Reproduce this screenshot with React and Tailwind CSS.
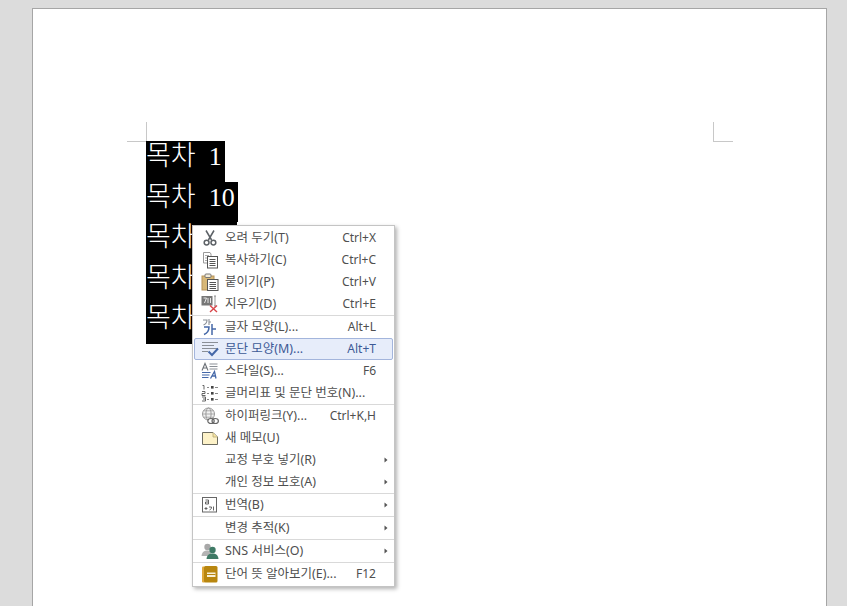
const Cut = () => (
  <svg width="18" height="18" viewBox="0 0 18 18" fill="none">
    <path d="M5 1.5 L10.6 11 M13 1.5 L7.4 11" stroke="#5c6166" strokeWidth="1.5" />
    <circle cx="5.6" cy="13.6" r="2.4" stroke="#5c6166" strokeWidth="1.5" />
    <circle cx="12.4" cy="13.6" r="2.4" stroke="#5c6166" strokeWidth="1.5" />
  </svg>
);
const Copy = () => (
  <svg width="18" height="18" viewBox="0 0 18 18" fill="none">
    <path d="M2.5 1.5 H9 L10 3 V12 H2.5 Z" fill="#fff" stroke="#9a9a9a" />
    <path d="M4 4.5H8M4 7H8M4 9.5H6" stroke="#aaa" />
    <rect x="6.5" y="5.5" width="10" height="11.5" fill="#fff" stroke="#555" />
    <path d="M8.5 8.5H14.5M8.5 10.5H14.5M8.5 12.5H14.5M8.5 14.5H14.5" stroke="#555" />
  </svg>
);
const Paste = () => (
  <svg width="18" height="18" viewBox="0 0 18 18" fill="none">
    <rect x="1" y="3" width="12" height="14" fill="#d8b878" stroke="#b8945a" />
    <rect x="4" y="1" width="6" height="3.5" rx="1" fill="#f4ecd8" stroke="#777" />
    <rect x="6.5" y="6.5" width="10.5" height="11" fill="#fff" stroke="#555" />
    <path d="M8.5 9.5H15M8.5 11.5H15M8.5 13.5H15M8.5 15.5H15" stroke="#555" />
  </svg>
);
const Erase = () => (
  <svg width="18" height="18" viewBox="0 0 18 18" fill="none">
    <rect x="0.5" y="1" width="11" height="9.5" fill="#777" />
    <path d="M2.5 3H5.5L3.5 8M7 3V8M9.5 3V8" stroke="#e8e8e8" strokeWidth="1" />
    <path d="M13 1H15M14 1V11M13 11H15" stroke="#888" strokeWidth="0.9" />
    <path d="M9 10.5 L16 17 M16 10.5 L9 17" stroke="#d8454a" strokeWidth="1.4" />
  </svg>
);
const CharShape = () => (
  <svg width="18" height="18" viewBox="0 0 18 18" fill="none">
    <path d="M2 2H6C6 4.5 5 6 2.5 7" stroke="#8a8f96" strokeWidth="1.1" />
    <path d="M8 1V7M8 4H10" stroke="#8a8f96" strokeWidth="1.1" />
    <path d="M3 9H8C8 12.5 6.5 15 3 16.5" stroke="#4568a8" strokeWidth="1.5" />
    <path d="M11 6V17M11 11H15" stroke="#4568a8" strokeWidth="1.5" />
  </svg>
);
const ParaShape = () => (
  <svg width="18" height="18" viewBox="0 0 18 18" fill="none">
    <path d="M1 2.5H17M1 5.5H13M1 8.5H17M1 11.5H7" stroke="#8a8f96" strokeWidth="1.1" />
    <path d="M7.5 11.5 L11 15 L17 8.5" stroke="#4568a8" strokeWidth="2" />
  </svg>
);
const Style = () => (
  <svg width="18" height="18" viewBox="0 0 18 18" fill="none">
    <path d="M1 8.5 L4 1.5 L7 8.5 M2.2 6H5.8" stroke="#6d7278" strokeWidth="1.1" />
    <path d="M8.5 2H16.5M8.5 4.5H16.5M8.5 7H16.5" stroke="#8a8f96" />
    <path d="M1 10.5H9.5M1 13H8.5M1 15.5H7.5" stroke="#4568a8" strokeWidth="1.1" />
    <path d="M9.5 16.5 L13.5 9.5 L15 16.5 M11 14H15" stroke="#4568a8" strokeWidth="1.3" />
  </svg>
);
const Bullet = () => (
  <svg width="18" height="18" viewBox="0 0 18 18" fill="none">
    <path d="M1.5 1.5H3V5.5M1 7.5H4V9.5H1V11.5H4.5M1 13H4.5V15H2M4.5 15V17H1" stroke="#555" strokeWidth="0.9" />
    <path d="M6 3.5H8M6 9.5H8M6 15.5H8" stroke="#888" />
    <rect x="10" y="2" width="2.6" height="2.6" fill="#444" />
    <rect x="10" y="8" width="2.6" height="2.6" fill="#444" />
    <rect x="10" y="14" width="2.6" height="2.6" fill="#444" />
    <path d="M14 3.5H17M14 9.5H17M14 15.5H17" stroke="#888" />
  </svg>
);
const Link = () => (
  <svg width="18" height="18" viewBox="0 0 18 18" fill="none">
    <circle cx="7.5" cy="7" r="6" fill="#f2f2f2" stroke="#9a9a9a" />
    <ellipse cx="7.5" cy="7" rx="2.6" ry="6" stroke="#9a9a9a" />
    <path d="M1.5 7H13.5M2.5 3.8H12.5M2.5 10.2H12.5" stroke="#9a9a9a" strokeWidth="0.8" />
    <ellipse cx="10" cy="14" rx="3.2" ry="2.5" fill="#fff" stroke="#666" strokeWidth="1.2" />
    <ellipse cx="14.2" cy="14" rx="3.2" ry="2.5" stroke="#666" strokeWidth="1.2" />
  </svg>
);
const Memo = () => (
  <svg width="18" height="18" viewBox="0 0 18 18" fill="none">
    <path d="M1.5 3.5H12L16.5 8V15.5H1.5Z" fill="#fdf2c8" stroke="#6b6b60" />
    <path d="M12 3.5V8H16.5" fill="#f6e4a0" stroke="#b5a878" strokeWidth="0.8" />
  </svg>
);
const Translate = () => (
  <svg width="18" height="18" viewBox="0 0 18 18" fill="none">
    <rect x="1.5" y="1.5" width="14" height="14.5" fill="#fff" stroke="#666" />
    <path d="M4.5 4H7.5V8H4.5V6H7.5" stroke="#555" strokeWidth="0.9" />
    <path d="M3.5 12.5H6.5M5 11V14M8 11H10.5C10.5 12.5 10 13.5 8.5 14M12.5 10.5V14.5" stroke="#555" strokeWidth="0.9" />
  </svg>
);
const Sns = () => (
  <svg width="18" height="18" viewBox="0 0 18 18" fill="none">
    <circle cx="6.5" cy="5" r="3.2" fill="#a8a8a8" />
    <path d="M0.5 14C1 10 3 8.5 6.5 8.5C9 8.5 10 10 10 14Z" fill="#b4b4b4" />
    <circle cx="11.5" cy="8" r="3.2" fill="#3f7a66" />
    <path d="M5.5 17C6 13 8 11.5 11.5 11.5C15 11.5 17 13 17.5 17Z" fill="#3f7a66" />
  </svg>
);
const Dict = () => (
  <svg width="18" height="18" viewBox="0 0 18 18" fill="none">
    <rect x="1" y="1.5" width="3" height="16" rx="1" fill="#e0a93c" />
    <rect x="3" y="1" width="13.5" height="16.5" rx="1.5" fill="#b8860f" />
    <rect x="6" y="7.5" width="8.5" height="4.5" fill="#f8f0d8" />
    <path d="M6 9.5H14.5" stroke="#b8860f" />
  </svg>
);

const Arrow = () => (
  <svg width="4" height="6" viewBox="0 0 4 6">
    <path d="M0.5 0.5 L3.5 3 L0.5 5.5 Z" fill="#555" />
  </svg>
);

const Row = ({ icon: Icon, label, keys, sub, active }) => (
  <div
    className={
      "h-[22px] flex items-center border rounded-[2px] " +
      (active ? "bg-[#e7edfa] border-[#a3b5dc] text-[#3d5a96]" : "border-transparent text-[#4f4f4f]")
    }
  >
    <div className="w-[30px] shrink-0 flex items-center justify-center">{Icon ? <Icon /> : null}</div>
    <div className="flex-1 whitespace-nowrap text-[12.5px]">{label}</div>
    {keys ? <div className="whitespace-nowrap text-[12px]">{keys}</div> : null}
    <div className="w-[16px] shrink-0 flex justify-center pl-[3px]">{sub ? <Arrow /> : null}</div>
  </div>
);

const Sep = () => <div className="h-px bg-[#d9d9d9] -mx-px" />;

const groups = [
  [
    { icon: Cut, label: "오려 두기(T)", keys: "Ctrl+X" },
    { icon: Copy, label: "복사하기(C)", keys: "Ctrl+C" },
    { icon: Paste, label: "붙이기(P)", keys: "Ctrl+V" },
    { icon: Erase, label: "지우기(D)", keys: "Ctrl+E" },
  ],
  [
    { icon: CharShape, label: "글자 모양(L)...", keys: "Alt+L" },
    { icon: ParaShape, label: "문단 모양(M)...", keys: "Alt+T", active: true },
    { icon: Style, label: "스타일(S)...", keys: "F6" },
    { icon: Bullet, label: "글머리표 및 문단 번호(N)..." },
  ],
  [
    { icon: Link, label: "하이퍼링크(Y)...", keys: "Ctrl+K,H" },
    { icon: Memo, label: "새 메모(U)" },
    { label: "교정 부호 넣기(R)", sub: true },
    { label: "개인 정보 보호(A)", sub: true },
  ],
  [{ icon: Translate, label: "번역(B)", sub: true }],
  [{ label: "변경 추적(K)", sub: true }],
  [{ icon: Sns, label: "SNS 서비스(O)", sub: true }],
  [{ icon: Dict, label: "단어 뜻 알아보기(E)...", keys: "F12" }],
];

const lines = ["1", "10", "11", "12", "13"];

export default function App() {
  return (
    <div className="h-[606px] overflow-hidden bg-[#dcdcdc] pt-[8px] pl-[32px]">
      <div className="relative w-[795px] h-[700px] bg-white border border-[#a6a6a6] pt-[132px] pl-[113px]">
        <div className="absolute left-[113px] top-[113px] w-px h-[19px] bg-[#c8c8c8]" />
        <div className="absolute left-[94px] top-[132px] w-[19px] h-px bg-[#c8c8c8]" />
        <div className="absolute left-[680px] top-[113px] w-px h-[19px] bg-[#c8c8c8]" />
        <div className="absolute left-[680px] top-[132px] w-[20px] h-px bg-[#c8c8c8]" />

        <div className="flex flex-col items-start font-['Liberation_Serif','Noto_Sans_CJK_KR',serif] text-[26px] text-white">
          {lines.map((n) => (
            <div key={n} className="h-[40.6px] leading-[26px] bg-black pr-[3px] whitespace-pre">
              <span className="font-['Noto_Sans_CJK_KR',sans-serif] font-light text-[27px]">목차</span>
              {"  "}
              {n}
            </div>
          ))}
        </div>

        <div className="absolute left-[159px] top-[216px] w-[203px] bg-white border border-[#c4c4c4] shadow-[2px_2px_4px_rgba(0,0,0,0.3)] p-px font-['Noto_Sans','Noto_Sans_CJK_KR',sans-serif]">
          {groups.map((g, i) => (
            <div key={i}>
              {i > 0 ? <Sep /> : null}
              {g.map((r) => (
                <Row key={r.label} {...r} />
              ))}
            </div>
          ))}
        </div>
      </div>
    </div>
  );
}
